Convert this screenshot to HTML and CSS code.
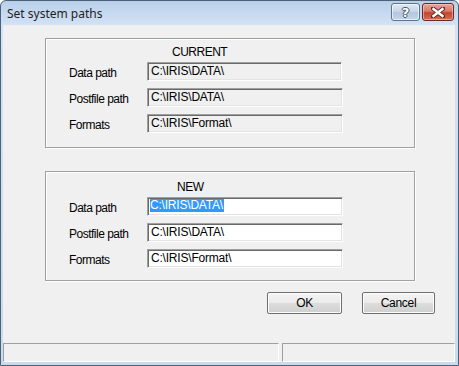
FILE: index.html
```html
<!DOCTYPE html>
<html lang="en">
<head>
  <meta charset="UTF-8">
  <title>Set system paths</title>
  <link rel="stylesheet" href="styles.css">
</head>
<body>

  <div class="window">
    <div class="titlebar">
      <span class="title">Set system paths</span>
      <div class="caption-buttons">
        <span class="cap-btn help">?</span>
        <span class="cap-btn close">
          <svg width="14" height="11" viewBox="0 0 14 11">
            <path d="M2 1.5 L12 9.5 M12 1.5 L2 9.5" stroke="#5a2a22" stroke-width="4.2" stroke-linecap="square"/>
            <path d="M2.5 2 L11.5 9 M11.5 2 L2.5 9" stroke="#ffffff" stroke-width="2.4" stroke-linecap="square"/>
          </svg>
        </span>
      </div>
    </div>

    <div class="client">
      <div class="group group-current">
        <div class="group-title">CURRENT</div>
        <div class="row">
          <span class="label">Data path</span>
          <div class="field readonly">C:\IRIS\DATA\</div>
        </div>
        <div class="row">
          <span class="label">Postfile path</span>
          <div class="field readonly wide">C:\IRIS\DATA\</div>
        </div>
        <div class="row">
          <span class="label">Formats</span>
          <div class="field readonly wide">C:\IRIS\Format\</div>
        </div>
      </div>

      <div class="group group-new">
        <div class="group-title">NEW</div>
        <div class="row">
          <span class="label">Data path</span>
          <div class="field wide"><span class="sel">C:\IRIS\DATA\</span></div>
        </div>
        <div class="row">
          <span class="label">Postfile path</span>
          <div class="field wide">C:\IRIS\DATA\</div>
        </div>
        <div class="row">
          <span class="label">Formats</span>
          <div class="field wide">C:\IRIS\Format\</div>
        </div>
      </div>

      <div class="buttons">
        <button class="btn btn-ok">OK</button>
        <button class="btn btn-cancel">Cancel</button>
      </div>

      <div class="statusbar">
        <div class="panel panel-main"></div>
        <div class="panel panel-side"></div>
      </div>
    </div>
  </div>

</body>
</html>
```

FILE: styles.css
```css
body {
  margin: 0;
  padding: 0;
  width: 459px;
  height: 366px;
  overflow: hidden;
  background: #ffffff;
  font-family: 'Liberation Sans', Arial, sans-serif;
  font-size: 12px;
  color: #000;
}

.window {
  width: 459px;
  height: 366px;
  box-sizing: border-box;
  border: 1px solid #4d6277;
  border-radius: 6px 6px 0 0;
  background: linear-gradient(to bottom, #b9cfe9 0px, #c6d9f0 12px, #d3e2f4 24px, #c9dbf0 100%);
  display: flex;
  flex-direction: column;
}

.titlebar {
  height: 24px;
  display: flex;
  justify-content: space-between;
  align-items: flex-start;
}

.title {
  font-family: 'Noto Sans', 'Open Sans', sans-serif;
  font-size: 12px;
  color: #1e1e1e;
  padding: 5px 0 0 6px;
  line-height: 16px;
}

.caption-buttons {
  display: flex;
  gap: 2px;
  margin: 2px 4px 0 0;
}

.cap-btn {
  height: 18px;
  box-sizing: border-box;
  border: 1px solid #5f7389;
  border-radius: 3px;
  display: flex;
  align-items: center;
  justify-content: center;
}

.help {
  width: 29px;
  background: linear-gradient(to bottom, #dde8f4 0%, #c4d5e8 50%, #b2c6dd 51%, #c5d6ea 100%);
  box-shadow: inset 0 0 0 1px rgba(255, 255, 255, 0.6);
  font-family: 'DejaVu Sans', sans-serif;
  font-weight: bold;
  font-size: 13px;
  color: #ffffff;
  text-shadow: 1px 0 #45556a, -1px 0 #45556a, 0 1px #45556a, 0 -1px #45556a;
}

.close {
  width: 32px;
  border-color: #6b2a22;
  background: linear-gradient(to bottom, #e8a797 0%, #d67a69 45%, #c4442f 55%, #d2705b 100%);
  box-shadow: inset 0 0 0 1px rgba(255, 220, 210, 0.5);
}

.client {
  flex: 1;
  margin: 0 3px 3px 2px;
  background: #f0f0f0;
  display: flex;
  flex-direction: column;
}

.group {
  margin-left: 42px;
  width: 370px;
  height: 110px;
  box-sizing: border-box;
  border: 1px solid #a0a0a0;
  box-shadow: inset 1px 1px 0 #ffffff, 1px 1px 0 #ffffff;
}

.group-current {
  margin-top: 13px;
}

.group-new {
  margin-top: 23px;
}

.group-title {
  line-height: 14px;
  margin-bottom: 3px;
  letter-spacing: -0.5px;
}

.group-current .group-title {
  padding: 6px 0 0 126px;
}

.group-new .group-title {
  padding: 8px 0 0 131px;
}

.row {
  display: flex;
  height: 19px;
  margin-bottom: 7px;
}

.label {
  width: 78px;
  padding: 3px 0 0 23px;
  line-height: 16px;
  letter-spacing: -0.5px;
}

.field {
  width: 195px;
  height: 19px;
  box-sizing: border-box;
  border: 1px solid;
  border-color: #a0a0a0 #ffffff #ffffff #a0a0a0;
  box-shadow: inset 1px 1px 0 #696969, inset -1px -1px 0 #e3e3e3;
  background: #ffffff;
  padding: 0 0 0 3px;
  line-height: 17px;
  white-space: nowrap;
  overflow: hidden;
  letter-spacing: -0.2px;
}

.field.wide {
  width: 196px;
}

.field.readonly {
  background: #f0f0f0;
}

.sel {
  background: #3399ff;
  color: #ffffff;
  display: inline-block;
  line-height: 13px;
  padding: 0 1px 0 0;
  margin-left: -1px;
  vertical-align: 1px;
}

.buttons {
  display: flex;
  justify-content: flex-end;
  gap: 20px;
  margin: 11px 20px 0 0;
}

.btn {
  height: 22px;
  box-sizing: border-box;
  border: 1px solid #707070;
  border-radius: 2px;
  background: linear-gradient(to bottom, #f4f4f4 0%, #ebebeb 50%, #dddddd 51%, #cfcfcf 100%);
  box-shadow: inset 0 0 0 1px #fcfcfc;
  font-family: 'Liberation Sans', Arial, sans-serif;
  font-size: 12px;
  letter-spacing: -0.3px;
  color: #000;
  padding: 0;
}

.btn-ok {
  width: 75px;
}

.btn-cancel {
  width: 73px;
}

.statusbar {
  margin-top: 29px;
  height: 19px;
  display: flex;
  gap: 3px;
}

.panel {
  box-sizing: border-box;
  border: 1px solid;
  border-color: #a0a0a0 #ffffff #ffffff #a0a0a0;
}

.panel-main {
  width: 276px;
}

.panel-side {
  flex: 1;
}
```
